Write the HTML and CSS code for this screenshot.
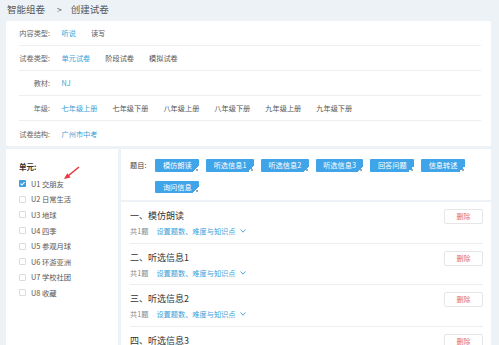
FILE: index.html
```html
<!DOCTYPE html>
<html lang="zh-CN">
<head>
<meta charset="utf-8">
<title>创建试卷</title>
<link rel="stylesheet" href="styles.css">
</head>
<body>
<div class="crumb"><span>智能组卷</span><span class="sep">&gt;</span><span>创建试卷</span></div>

<section class="filters">
  <div class="row"><span class="label">内容类型:</span><span class="opt on">听说</span><span class="opt">读写</span></div>
  <div class="row"><span class="label">试卷类型:</span><span class="opt on">单元试卷</span><span class="opt">阶段试卷</span><span class="opt">模拟试卷</span></div>
  <div class="row"><span class="label">教材:</span><span class="opt on">NJ</span></div>
  <div class="row"><span class="label">年级:</span><span class="opt on">七年级上册</span><span class="opt">七年级下册</span><span class="opt">八年级上册</span><span class="opt">八年级下册</span><span class="opt">九年级上册</span><span class="opt">九年级下册</span></div>
  <div class="row"><span class="label">试卷结构:</span><span class="opt on">广州市中考</span></div>
</section>

<div class="main">
  <aside class="units">
    <div class="units-title">单元:</div>
    <ul class="unit-list">
      <li><span class="box checked"><svg viewBox="0 0 7 7" width="7" height="7"><rect width="7" height="7" rx="1" fill="#3d9fe0"/><polyline points="1.6,3.6 3,5 5.6,2" fill="none" stroke="#fff" stroke-width="1.1"/></svg></span>U1 交朋友</li>
      <li><span class="box"></span>U2 日常生活</li>
      <li><span class="box"></span>U3 地球</li>
      <li><span class="box"></span>U4 四季</li>
      <li><span class="box"></span>U5 参观月球</li>
      <li><span class="box"></span>U6 环游亚洲</li>
      <li><span class="box"></span>U7 学校社团</li>
      <li><span class="box"></span>U8 收藏</li>
    </ul>
    <svg class="arrow" viewBox="0 0 112 40" width="112" height="40">
      <line x1="73" y1="18" x2="62" y2="27" stroke="#e6393e" stroke-width="1.6"/>
      <polygon points="58,30 64.6,28.6 61.2,24.2" fill="#e6393e"/>
    </svg>
  </aside>

  <div class="paper">
    <div class="topics">
      <span class="topics-label">题目:</span>
      <div class="tags">
        <span class="tag">模仿朗读</span>
        <span class="tag">听选信息1</span>
        <span class="tag">听选信息2</span>
        <span class="tag">听选信息3</span>
        <span class="tag">回答问题</span>
        <span class="tag">信息转述</span>
        <span class="tag">询问信息</span>
      </div>
    </div>
    <ul class="sections">
      <li class="sec">
        <div class="sec-info">
          <div class="sec-title">一、模仿朗读</div>
          <div class="sec-sub"><span class="count">共1题</span><span class="link">设置题数、难度与知识点</span><svg class="chev" viewBox="0 0 6 4" width="6" height="4"><polyline points="0.5,0.5 3,3.2 5.5,0.5" fill="none" stroke="#3a9fd8" stroke-width="0.9"/></svg></div>
        </div>
        <span class="del">删除</span>
      </li>
      <li class="sec">
        <div class="sec-info">
          <div class="sec-title">二、听选信息1</div>
          <div class="sec-sub"><span class="count">共1题</span><span class="link">设置题数、难度与知识点</span><svg class="chev" viewBox="0 0 6 4" width="6" height="4"><polyline points="0.5,0.5 3,3.2 5.5,0.5" fill="none" stroke="#3a9fd8" stroke-width="0.9"/></svg></div>
        </div>
        <span class="del">删除</span>
      </li>
      <li class="sec">
        <div class="sec-info">
          <div class="sec-title">三、听选信息2</div>
          <div class="sec-sub"><span class="count">共1题</span><span class="link">设置题数、难度与知识点</span><svg class="chev" viewBox="0 0 6 4" width="6" height="4"><polyline points="0.5,0.5 3,3.2 5.5,0.5" fill="none" stroke="#3a9fd8" stroke-width="0.9"/></svg></div>
        </div>
        <span class="del">删除</span>
      </li>
      <li class="sec">
        <div class="sec-info">
          <div class="sec-title">四、听选信息3</div>
          <div class="sec-sub"><span class="count">共1题</span><span class="link">设置题数、难度与知识点</span><svg class="chev" viewBox="0 0 6 4" width="6" height="4"><polyline points="0.5,0.5 3,3.2 5.5,0.5" fill="none" stroke="#3a9fd8" stroke-width="0.9"/></svg></div>
        </div>
        <span class="del">删除</span>
      </li>
    </ul>
  </div>
</div>
</body>
</html>
```

FILE: styles.css
```css
* {
  box-sizing: border-box;
  margin: 0;
  padding: 0;
}

html, body {
  width: 499px;
  height: 345px;
  overflow: hidden;
}

body {
  background: #edf2f7;
  font-family: "Noto Sans CJK SC", "Noto Sans", sans-serif;
  color: #555;
}

/* breadcrumb */
.crumb {
  display: flex;
  height: 21px;
  line-height: 18px;
  padding-left: 7px;
  font-size: 9.5px;
  color: #555;
}

.crumb .sep {
  margin: 0 9px 0 12px;
  font-size: 8.5px;
  color: #666;
}

/* filter card */
.filters {
  margin: 0 8px 0 6px;
  padding: 0 10px 0 13px;
  background: #fff;
  border-radius: 2px;
}

.row {
  display: flex;
  align-items: center;
  height: 25px;
  border-bottom: 1px solid #eeeeee;
  font-size: 7.2px;
}

.row:last-child {
  border-bottom: none;
}

.label {
  width: 31px;
  margin-right: 4px;
  text-align: right;
  color: #666;
  white-space: nowrap;
}

.opt {
  padding: 0 7.5px;
  color: #555;
  white-space: nowrap;
}

.opt.on {
  color: #3a9fd8;
}

/* lower area */
.main {
  display: flex;
  gap: 3px;
  height: 200px;
  margin: 3px 8px 0 6px;
}

.units {
  position: relative;
  width: 112px;
  flex: none;
  padding: 12px 0 0 13px;
  background: #fff;
}

.units-title {
  margin-bottom: 3px;
  font-size: 7.5px;
  line-height: 12px;
  font-weight: bold;
  color: #333;
}

.unit-list {
  list-style: none;
}

.unit-list li {
  display: flex;
  align-items: center;
  height: 15.6px;
  font-size: 7.3px;
  color: #555;
  white-space: nowrap;
}

.box {
  display: block;
  width: 7px;
  height: 7px;
  margin-right: 5px;
  border: 1px solid #dcdcdc;
  border-radius: 1px;
}

.box.checked {
  border: none;
}

.box svg {
  display: block;
}

.arrow {
  position: absolute;
  left: 0;
  top: 0;
}

/* paper card */
.paper {
  flex: 1;
  background: #fff;
}

.topics {
  display: flex;
  padding: 10px 8px 7px 9px;
  border-bottom: 2px solid #eef2f6;
}

.topics-label {
  margin-right: 9px;
  font-size: 7.2px;
  line-height: 12.5px;
  color: #444;
  white-space: nowrap;
}

.tags {
  display: flex;
  flex-wrap: wrap;
  flex: 1;
  gap: 9px 7px;
}

.tag {
  position: relative;
  height: 12.5px;
  padding: 0 7.5px;
  line-height: 12.5px;
  font-size: 7.2px;
  color: #fff;
  background: #40a4e8;
  border-radius: 1px;
  white-space: nowrap;
}

.tag::after {
  content: "";
  position: absolute;
  right: 0;
  bottom: 0;
  width: 6px;
  height: 6px;
  background: linear-gradient(135deg, transparent 50%, #fff 50%);
}

.tag::before {
  content: "";
  position: absolute;
  right: 1px;
  bottom: 1px;
  width: 2px;
  height: 2px;
  background: #9aa6b2;
  z-index: 1;
}

.sections {
  list-style: none;
  padding: 0 8px 0 9px;
}

.sec {
  display: flex;
  justify-content: space-between;
  align-items: flex-start;
  padding: 8px 0 6.5px;
  border-bottom: 1px solid #eeeeee;
}

.sec-title {
  margin-bottom: 4px;
  font-size: 9px;
  line-height: 12px;
  color: #333;
}

.sec-sub {
  display: flex;
  align-items: center;
  font-size: 7.2px;
  line-height: 10px;
  color: #888;
}

.count {
  margin-right: 8px;
}

.link {
  color: #3a9fd8;
}

.chev {
  display: block;
  margin-left: 5px;
}

.del {
  width: 39px;
  height: 15px;
  margin-top: -1px;
  border: 1px solid #e6e6e6;
  border-radius: 2px;
  font-size: 7px;
  line-height: 13px;
  text-align: center;
  color: #e36b6b;
}
```
